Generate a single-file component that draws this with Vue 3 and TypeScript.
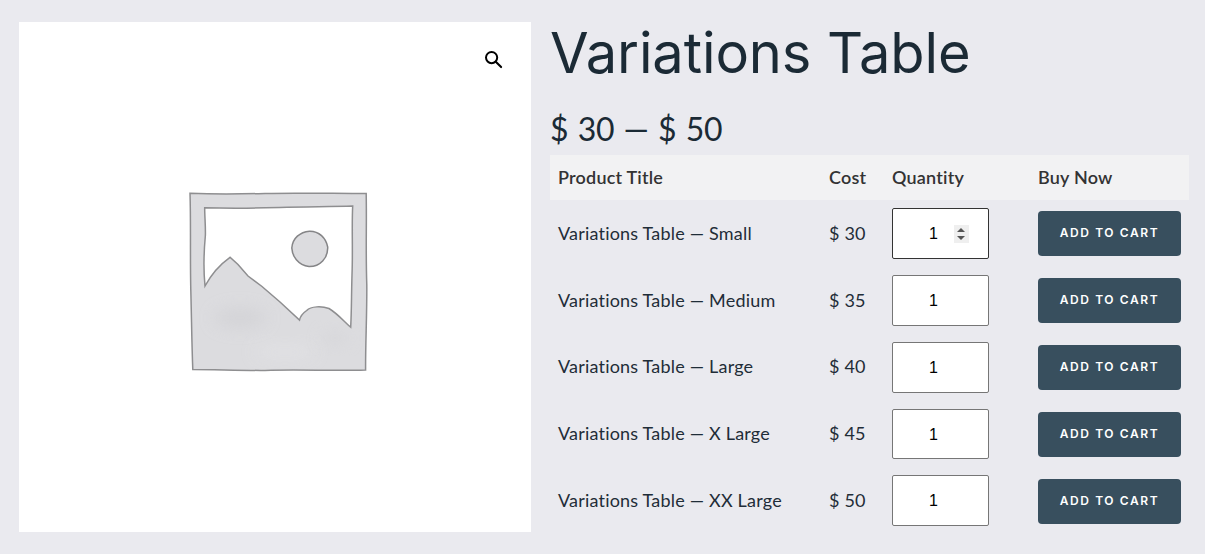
<script setup lang="ts">
interface Row { name: string; price: number }
const rows: Row[] = [
  { name: 'Small', price: 30 },
  { name: 'Medium', price: 35 },
  { name: 'Large', price: 40 },
  { name: 'X Large', price: 45 },
  { name: 'XX Large', price: 50 },
]
</script>

<template>
  <div class="page">
    <div class="gallery">
      <svg class="placeholder" viewBox="0 0 512 510" aria-hidden="true">
        <defs>
          <filter id="soft"><feGaussianBlur stdDeviation="0.5" /></filter>
          <filter id="cloud" x="-60%" y="-100%" width="220%" height="300%"><feGaussianBlur stdDeviation="8" /></filter>
        </defs>
        <g transform="translate(-19 -22)">
          <g filter="url(#soft)">
            <path
              fill="#dcdcdf"
              stroke="#8e8e90"
              stroke-width="1.500"
              fill-rule="evenodd"
              d="M190 193.300C215 194.200 240 194 265 193.400C300 192.600 335 193.600 366.200 193.600C366.800 225 365.600 250 366.800 285C367 315 365.400 345 365.600 370C335 371 300 369.400 265 370.400C240 370.600 215 369.400 192.800 369.400C191.800 345 191.600 320 190.800 290C190 255 191 225 190 193.300Z
                 M204.700 207.700C225 208.400 255 208.200 280 207.500C305 206.600 330 206.800 352.700 206C351.600 225 353 250 352 275C351.400 295 351.600 310 350.700 327.300C344 321.500 338 314 329 308.500C322 306 311 306 306.700 310.500C303 313 300.500 316 299.500 320L280 302L262 286.500L248 276L238 264.500L230 257.300C222 263 212 273 205 286C203.400 270 204 250 205.400 235C205.600 225 204.600 215 204.700 207.700Z"
            />
          </g>
          <ellipse cx="240" cy="318" rx="26" ry="10" fill="#d0d0d4" opacity="0.7" filter="url(#cloud)" />
          <ellipse cx="285" cy="352" rx="30" ry="6" fill="#e3e3e6" opacity="0.8" filter="url(#cloud)" />
          <ellipse cx="335" cy="338" rx="14" ry="6" fill="#d2d2d6" opacity="0.6" filter="url(#cloud)" />
          <g filter="url(#soft)">
            <path
              fill="#dcdcdf"
              stroke="#858587"
              stroke-width="1.500"
              d="M309.500 231.200C319 231 326 238 327.700 247C328.200 258 320 266.800 309 266.600C298 265 292 256 291.800 248C292.600 238 300 232 309.500 231.200Z"
            />
          </g>
        </g>
      </svg>
      <svg class="zoom" viewBox="0 0 20 20" aria-hidden="true">
        <circle cx="8" cy="8" r="5.900" fill="none" stroke="#000" stroke-width="2.100" />
        <path d="M12.400 12.400L18 18" stroke="#000" stroke-width="2.200" stroke-linecap="round" />
      </svg>
    </div>
    <div class="summary">
      <h1 class="title">Variations Table</h1>
      <p class="range">$ 30 — $ 50</p>
      <div class="variations">
        <div class="head">Product Title</div>
        <div class="head">Cost</div>
        <div class="head">Quantity</div>
        <div class="head">Buy Now</div>
        <template v-for="(row, i) in rows" :key="row.name">
          <div class="cell text">Variations Table — {{ row.name }}</div>
          <div class="cell text">$ {{ row.price }}</div>
          <div class="cell">
            <div class="qty" :class="{ active: i === 0 }">
              <span class="qty-value">1</span>
              <span v-if="i === 0" class="spinner">
                <i class="up"></i>
                <i class="down"></i>
              </span>
            </div>
          </div>
          <div class="cell">
            <button class="cart" type="button">ADD TO CART</button>
          </div>
        </template>
      </div>
    </div>
  </div>
</template>

<style>
html, body { margin: 0; background: #eaeaef; }
</style>

<style scoped>
.page {
  width: 1205px;
  height: 554px;
  box-sizing: border-box;
  padding: 22px 16px 0 19px;
  display: flex;
  gap: 19px;
  background: #eaeaef;
  overflow: hidden;
}
.gallery {
  position: relative;
  width: 512px;
  height: 510px;
  flex: none;
  background: #fff;
}
.placeholder {
  display: block;
  width: 512px;
  height: 510px;
}
.zoom {
  position: absolute;
  left: 464.500px;
  top: 27.500px;
  width: 19px;
  height: 19px;
}
.summary {
  flex: 1;
  min-width: 0;
}
.title {
  margin: 0;
  height: 73px;
  font: 400 56px/62px Inter, sans-serif;
  letter-spacing: -0.1px;
  color: #1b2a35;
}
.range {
  margin: 0;
  height: 60px;
  font: 400 32px/68px Lato, sans-serif;
  letter-spacing: -0.3px;
  word-spacing: 1.500px;
  color: #1b2a35;
}
.variations {
  display: grid;
  grid-template-columns: 271px 63px 146px 159px;
  grid-template-rows: 45px repeat(5, 66.800px);
  width: 639px;
  font-family: Lato, sans-serif;
  font-size: 18px;
  letter-spacing: 0.2px;
  color: #1f2d38;
}
.head {
  padding-left: 8px;
  font-weight: 600;
  line-height: 45px;
  color: #333;
  background: #f2f2f3;
}
.cell {
  padding-left: 8px;
  min-width: 0;
}
.text {
  padding-top: 20.800px;
  line-height: 24px;
}
.qty {
  position: relative;
  width: 97px;
  height: 50.800px;
  margin-top: 8.200px;
  box-sizing: border-box;
  border: 1px solid #767676;
  border-radius: 2px;
  background: #fff;
  font: 16px/49px "Liberation Sans", sans-serif;
  letter-spacing: 0;
  color: #000;
}
.qty.active { border-color: #333; }
.qty-value {
  position: absolute;
  left: 36px;
}
.spinner {
  position: absolute;
  left: 61px;
  top: 16px;
  width: 15px;
  height: 18px;
  background: #efefef;
}
.spinner i {
  position: absolute;
  left: 3px;
  width: 0;
  height: 0;
  border-left: 4px solid transparent;
  border-right: 4px solid transparent;
}
.spinner .up { top: 2.500px; border-bottom: 4px solid #555; }
.spinner .down { top: 10.500px; border-top: 4px solid #555; }
.cart {
  display: block;
  width: 143px;
  height: 45px;
  margin-top: 11.400px;
  padding: 0 0 2px;
  border: 0;
  border-radius: 4px;
  background: #384f5e;
  color: #fff;
  font: 600 12px Inter, sans-serif;
  letter-spacing: 1.600px;
  cursor: pointer;
}
</style>
